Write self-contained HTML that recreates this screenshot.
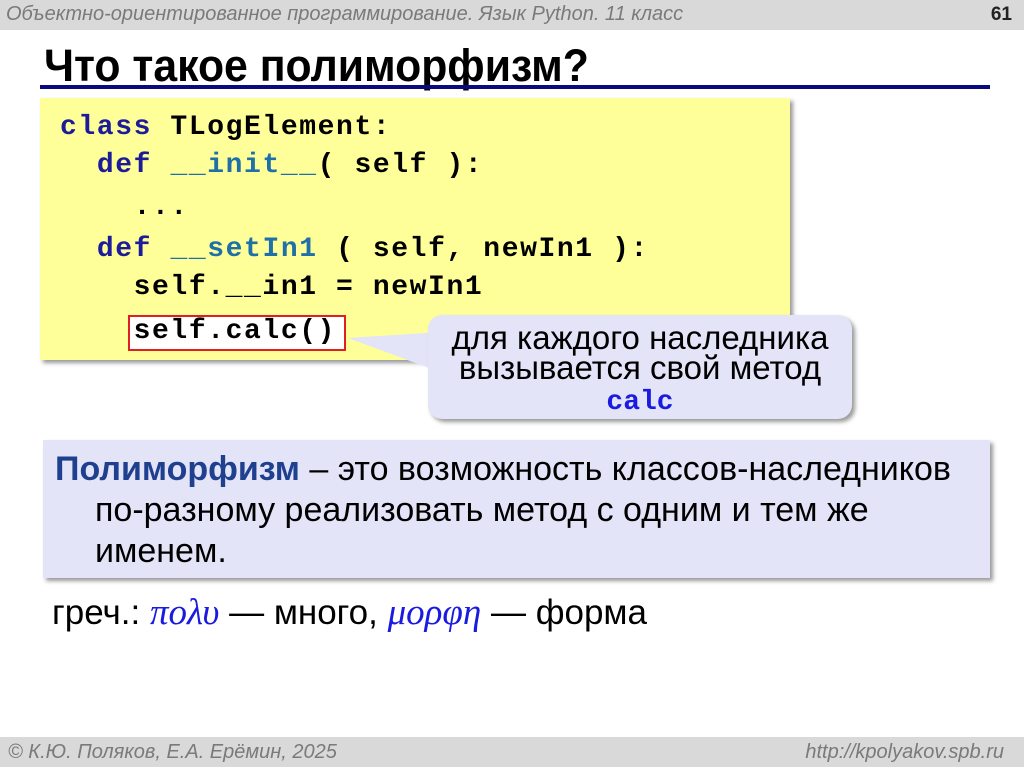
<!DOCTYPE html>
<html><head><meta charset="utf-8"><style>
body{margin:0;width:1024px;height:767px;position:relative;background:#fff;font-family:"Liberation Sans",sans-serif;overflow:hidden}
.hdr{position:absolute;left:0;top:0;width:1024px;height:30px;background:#d9d9d9}
.hdr .t{position:absolute;left:6px;top:3px;font-size:20px;font-style:italic;color:#7a7a7a;white-space:nowrap}
.hdr .n{position:absolute;right:12px;top:4px;font-size:19px;font-weight:bold;color:#222}
h1{position:absolute;left:44px;top:40px;margin:0;font-size:45px;font-weight:bold;transform:scaleX(.95);transform-origin:left;white-space:nowrap}
.line{position:absolute;left:40px;top:85px;width:950px;height:4px;background:#0a0a80}
.code{position:absolute;left:40px;top:98px;width:750px;height:262px;background:#ffff99;box-shadow:3px 3px 4px #999}
pre{position:absolute;margin:0;left:60px;font-family:"Liberation Mono",monospace;font-weight:bold;font-size:28px;letter-spacing:1.6px;color:#000}
.k{color:#1c1c9a}.f{color:#1f6fa8}
.box{position:absolute;left:128px;top:315px;width:218px;height:36px;border:2px solid #e02020;background:#fff;box-sizing:border-box}
.call{position:absolute;left:428px;top:315px;width:424px;height:104px;background:#e4e4f8;border-radius:14px;box-shadow:3px 3px 4px #999;text-align:center;font-size:33px;line-height:30px;padding-top:8px;box-sizing:border-box;white-space:nowrap}
.call .c{font-family:"Liberation Mono",monospace;font-weight:bold;color:#1a1ae0;font-size:28px}
.def{position:absolute;left:43px;top:440px;width:947px;height:138px;background:#e4e4f8;box-shadow:3px 3px 4px #999;font-size:34px;line-height:41px;white-space:nowrap}
.ftr{position:absolute;left:0;top:737px;width:1024px;height:30px;background:#d9d9d9;font-size:20px;font-style:italic;color:#7a7a7a}
</style></head><body>
<div class="hdr"><span class="t">Объектно-ориентированное программирование. Язык Python. 11 класс</span><span class="n">61</span></div>
<h1>Что такое полиморфизм?</h1>
<div class="line"></div>
<div class="code"></div>
<svg style="position:absolute;left:0;top:0" width="1024" height="767"><polygon points="348,338 440,332 440,372" fill="#e4e4f8"/></svg>
<div class="box"></div>
<pre style="top:112px"><span class="k">class</span> TLogElement:</pre>
<pre style="top:150px">  <span class="k">def</span> <span class="f">__init__</span>( self ):</pre>
<pre style="top:192px">    ...</pre>
<pre style="top:234px">  <span class="k">def</span> <span class="f">__setIn1</span> ( self, newIn1 ):</pre>
<pre style="top:272px">    self.__in1 = newIn1</pre>
<pre style="top:316px">    self.calc()</pre>
<div class="call">для каждого наследника<br>вызывается свой метод<br><span class="c">calc</span></div>
<div class="def"><div style="padding:9px 0 0 12px"><b style="color:#1f3f8f">Полиморфизм</b> – это возможность классов-наследников</div><div style="padding-left:52px">по-разному реализовать метод с одним и тем же<br>именем.</div></div>
<div style="position:absolute;left:52px;top:591px;font-size:35px">греч.: <i style="font-family:'Liberation Serif',serif;color:#1a1ae0;font-size:37px">πολυ</i> — много, <i style="font-family:'Liberation Serif',serif;color:#1a1ae0;font-size:37px">μορφη</i> — форма</div>
<div class="ftr"><span style="position:absolute;left:8px;top:4px">© К.Ю. Поляков, Е.А. Ерёмин, 2025</span><span style="position:absolute;right:20px;top:4px">http://kpolyakov.spb.ru</span></div>
</body></html>
